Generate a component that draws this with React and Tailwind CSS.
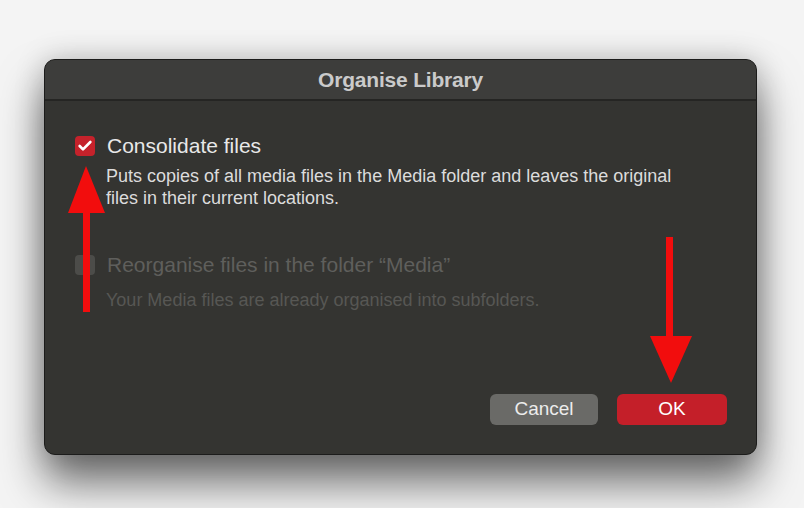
import { Check } from "lucide-react";

const font = { fontFamily: '"Liberation Sans", Arial, sans-serif' };

function Arrows() {
	// red annotation arrows drawn over the dialog
	return (
		<svg className="absolute inset-0 pointer-events-none" width="804" height="508" viewBox="0 0 804 508">
			<rect x="83" y="205" width="7" height="107" fill="#f20d0d" />
			<polygon points="86,166 68,213 105,213" fill="#f20d0d" />
			<rect x="666" y="237" width="7" height="105" fill="#f20d0d" />
			<polygon points="650,336 692,336 671,383" fill="#f20d0d" />
		</svg>
	);
}

export default function App() {
	return (
		<div className="relative w-[804px] h-[508px] overflow-hidden bg-[#f4f4f4] pl-[44px] pt-[59px]" style={font}>
			<div className="w-[713px] h-[396px] rounded-[11px] border border-[#1c1c1b] bg-[#343431] shadow-[0_28px_44px_rgba(0,0,0,0.55),0_0_30px_rgba(0,0,0,0.2)] flex flex-col overflow-hidden">
				<div className="h-[41px] shrink-0 bg-[#3d3d3b] border-b-2 border-[#252523] flex items-center justify-center">
					<span className="text-[21px] font-bold text-[#cacaca] tracking-[-0.2px]">Organise Library</span>
				</div>

				<div className="flex-1 flex flex-col pl-[30px] pr-[29px] pt-[33px] pb-[29px]">
					<div className="flex items-center gap-[12px] h-[24px]">
						<div className="w-[20px] h-[20px] rounded-[4px] bg-[#c5222b] flex items-center justify-center">
							<Check className="w-[16px] h-[16px] text-white" strokeWidth={4} />
						</div>
						<span className="text-[21px] leading-[24px] text-[#e8e8e8]">Consolidate files</span>
					</div>
					<p className="ml-[31px] mt-[7px] text-[18px] leading-[22px] text-[#dcdcdc] w-[590px]">
						Puts copies of all media files in the Media folder and leaves the original files in their current locations.
					</p>

					<div className="flex items-center gap-[12px] h-[24px] mt-[44px]">
						<div className="w-[20px] h-[20px] rounded-[4px] bg-[#4c4c49]" />
						<span className="text-[21px] leading-[24px] text-[#5f5f5c]">Reorganise files in the folder “Media”</span>
					</div>
					<p className="ml-[31px] mt-[12px] text-[18px] leading-[22px] text-[#575754]">
						Your Media files are already organised into subfolders.
					</p>

					<div className="flex-1" />

					<div className="flex justify-end gap-[19px]">
						<button className="w-[108px] h-[31px] rounded-[6px] bg-[#6a6a67] text-[19px] text-[#ececec]">Cancel</button>
						<button className="w-[110px] h-[31px] rounded-[6px] bg-[#c41f29] text-[19px] text-white">OK</button>
					</div>
				</div>
			</div>
			<Arrows />
		</div>
	);
}
